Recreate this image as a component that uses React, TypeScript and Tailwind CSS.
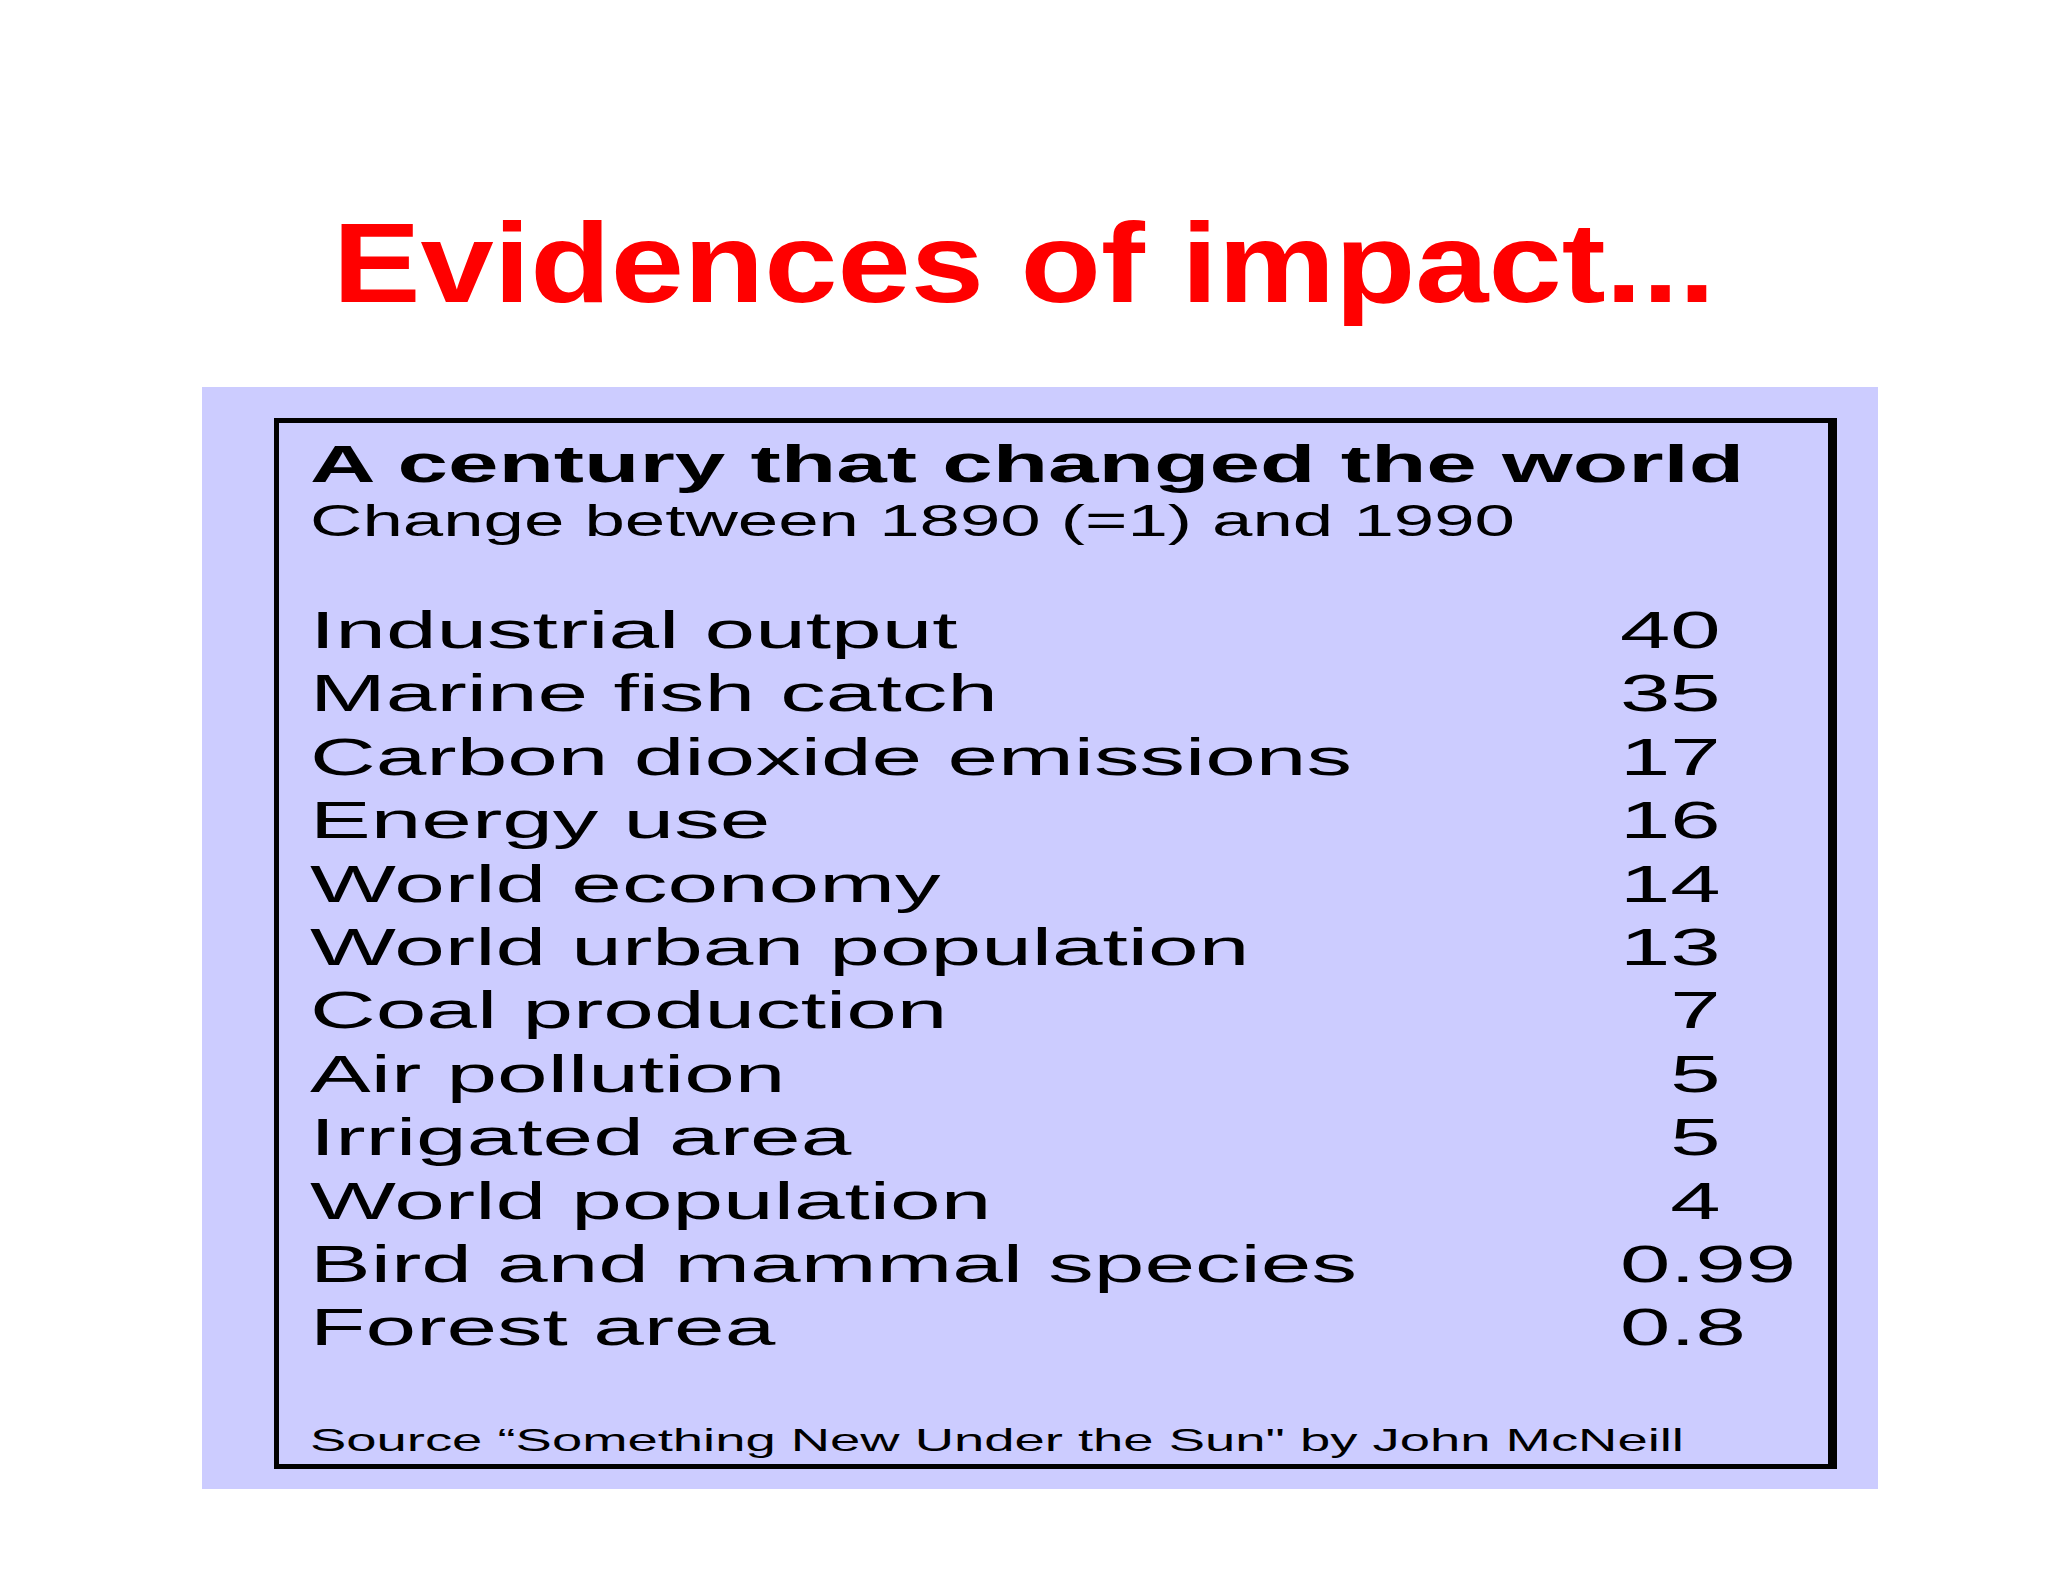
import React from 'react';

const rows: { label: string; value: string; pad?: boolean }[] = [
  { label: "Industrial output", value: "40" },
  { label: "Marine fish catch", value: "35" },
  { label: "Carbon dioxide emissions", value: "17" },
  { label: "Energy use", value: "16" },
  { label: "World economy", value: "14" },
  { label: "World urban population", value: "13" },
  { label: "Coal production", value: "7", pad: true },
  { label: "Air pollution", value: "5", pad: true },
  { label: "Irrigated area", value: "5", pad: true },
  { label: "World population", value: "4", pad: true },
  { label: "Bird and mammal species", value: "0.99" },
  { label: "Forest area", value: "0.8" },
];

export default function App() {
  return (
    <div className="w-[2048px] h-[1582px] bg-white overflow-hidden font-['Liberation_Sans',Arial,sans-serif]">
      <h1 className="pt-[207px] text-center text-[113px] leading-none font-bold text-[#ff0000] whitespace-nowrap scale-x-[1.165] origin-center">
        Evidences of impact...
      </h1>

      <div className="mt-[67px] ml-[202px] w-[1676px] bg-[#ccccff] pt-[31px] pb-[20px] pl-[72px] pr-[41px]">
        <div className="border-black border-t-[5px] border-l-[5px] border-b-[5px] border-r-[9px] pl-[31px] pt-[16px] pb-[8px] text-black">
          <div className="text-[51px] leading-none font-bold whitespace-nowrap origin-left scale-x-[1.78]">
            A century that changed the world
          </div>
          <div className="mt-[9px] text-[44px] leading-none whitespace-nowrap origin-left scale-x-[1.65]">
            Change between 1890 (=1) and 1990
          </div>

          <div className="mt-[56px] grid grid-cols-[1310px_auto] text-[52px] leading-[63.4px]">
            {rows.map((row) => (
              <React.Fragment key={row.label}>
                <div className="whitespace-nowrap origin-left scale-x-[1.75]">{row.label}</div>
                <div className="whitespace-nowrap origin-left scale-x-[1.74]">
                  {row.pad && <span className="invisible">0</span>}
                  {row.value}
                </div>
              </React.Fragment>
            ))}
          </div>

          <div className="mt-[64px] text-[32px] leading-none whitespace-nowrap origin-left scale-x-[1.7]">
            Source “Something New Under the Sun" by John McNeill
          </div>
        </div>
      </div>
    </div>
  );
}
